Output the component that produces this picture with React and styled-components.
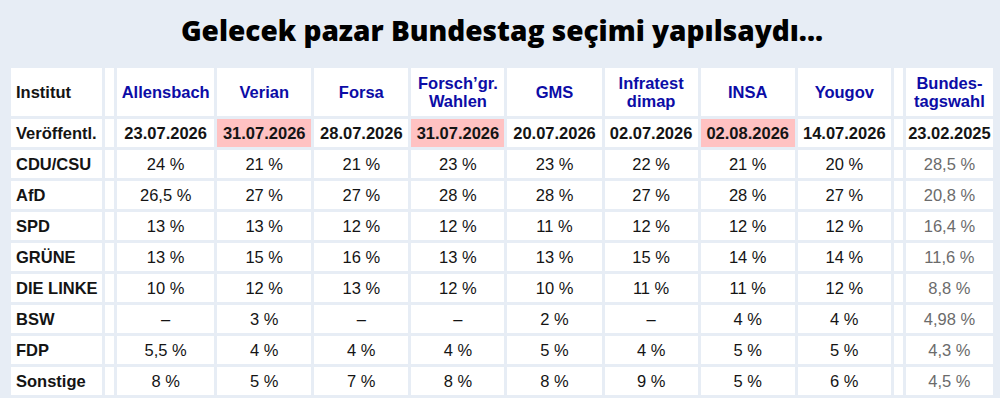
import React from "react";
import styled, { createGlobalStyle } from "styled-components";

const Global = createGlobalStyle`
  html, body { margin: 0; padding: 0; background: #ffffff; }
  body { font-family: "Liberation Sans", Arial, sans-serif; }
`;

const Page = styled.div`
  background: #e7edf5;
  padding: 0 4px 0 8px;
  width: 1000px;
  box-sizing: border-box;
`;

const Title = styled.h1`
  margin: 0;
  height: 65px;
  display: flex;
  align-items: center;
  justify-content: center;
  padding-bottom: 5px;
  box-sizing: border-box;
  font-family: "Open Sans", "Noto Sans", sans-serif;
  font-weight: 800;
  font-size: 28px;
  color: #000;
`;

const Table = styled.table`
  border-collapse: separate;
  border-spacing: 3px;
  width: 988px;
  table-layout: fixed;
  font-size: 16.5px;
`;

const Cell = styled.td`
  background: ${(p) => (p.$hl ? "#ffc2c2" : "#ffffff")};
  height: ${(p) => (p.$head ? "48px" : "28px")};
  padding: 0 ${(p) => (p.$first ? "5px" : "0")};
  text-align: ${(p) => (p.$first ? "left" : "center")};
  font-weight: ${(p) => (p.$bold ? 700 : 400)};
  color: ${(p) => (p.$link ? "#0c0ca6" : p.$muted ? "#6b6b6b" : "#141414")};
  line-height: 18.5px;
  white-space: nowrap;
  overflow: hidden;
  box-sizing: border-box;
`;

const institutes = [
  ["Allensbach"],
  ["Verian"],
  ["Forsa"],
  ["Forsch’gr.", "Wahlen"],
  ["GMS"],
  ["Infratest", "dimap"],
  ["INSA"],
  ["Yougov"],
];

const dates = [
  ["23.07.2026", false],
  ["31.07.2026", true],
  ["28.07.2026", false],
  ["31.07.2026", true],
  ["20.07.2026", false],
  ["02.07.2026", false],
  ["02.08.2026", true],
  ["14.07.2026", false],
];

const rows = [
  ["CDU/CSU", ["24 %", "21 %", "21 %", "23 %", "23 %", "22 %", "21 %", "20 %"], "28,5 %"],
  ["AfD", ["26,5 %", "27 %", "27 %", "28 %", "28 %", "27 %", "28 %", "27 %"], "20,8 %"],
  ["SPD", ["13 %", "13 %", "12 %", "12 %", "11 %", "12 %", "12 %", "12 %"], "16,4 %"],
  ["GRÜNE", ["13 %", "15 %", "16 %", "13 %", "13 %", "15 %", "14 %", "14 %"], "11,6 %"],
  ["DIE LINKE", ["10 %", "12 %", "13 %", "12 %", "10 %", "11 %", "11 %", "12 %"], "8,8 %"],
  ["BSW", ["–", "3 %", "–", "–", "2 %", "–", "4 %", "4 %"], "4,98 %"],
  ["FDP", ["5,5 %", "4 %", "4 %", "4 %", "5 %", "4 %", "5 %", "5 %"], "4,3 %"],
  ["Sonstige", ["8 %", "5 %", "7 %", "8 %", "8 %", "9 %", "5 %", "6 %"], "4,5 %"],
];

const widths = [91, 9, 97, 94, 94, 93, 94, 93, 94, 93, 9, 87];

function Lines({ parts }) {
  return parts.map((p, i) => (
    <React.Fragment key={i}>
      {i > 0 && <br />}
      {p}
    </React.Fragment>
  ));
}

export default function App() {
  return (
    <>
      <Global />
      <Page>
        <Title>Gelecek pazar Bundestag seçimi yapılsaydı...</Title>
        <Table>
          <colgroup>
            {widths.map((w, i) => (
              <col key={i} style={{ width: w }} />
            ))}
          </colgroup>
          <tbody>
            <tr>
              <Cell $head $first $bold>Institut</Cell>
              <Cell $head />
              {institutes.map((n, i) => (
                <Cell key={i} $head $bold $link>
                  <Lines parts={n} />
                </Cell>
              ))}
              <Cell $head />
              <Cell $head $bold $link>
                <Lines parts={["Bundes-", "tagswahl"]} />
              </Cell>
            </tr>
            <tr>
              <Cell $first $bold>Veröffentl.</Cell>
              <Cell />
              {dates.map(([d, hl], i) => (
                <Cell key={i} $bold $hl={hl}>{d}</Cell>
              ))}
              <Cell />
              <Cell $bold>23.02.2025</Cell>
            </tr>
            {rows.map(([party, vals, btw]) => (
              <tr key={party}>
                <Cell $first $bold>{party}</Cell>
                <Cell />
                {vals.map((v, i) => (
                  <Cell key={i}>{v}</Cell>
                ))}
                <Cell />
                <Cell $muted>{btw}</Cell>
              </tr>
            ))}
          </tbody>
        </Table>
      </Page>
    </>
  );
}
